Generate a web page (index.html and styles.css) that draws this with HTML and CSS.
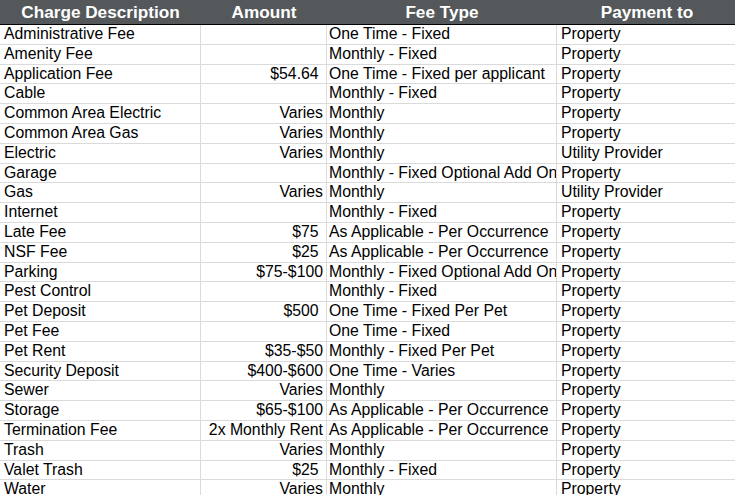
FILE: index.html
```html
<!DOCTYPE html>
<html>
<head>
<meta charset="utf-8">
<link rel="stylesheet" href="styles.css">
</head>
<body>
<div class="sheet">
  <div class="hd">Charge Description</div><div class="hd">Amount</div><div class="hd">Fee Type</div><div class="hd">Payment to</div>

  <div class="c">Administrative Fee</div><div class="c num"></div><div class="c">One Time - Fixed</div><div class="c">Property</div>
  <div class="c">Amenity Fee</div><div class="c num"></div><div class="c">Monthly - Fixed</div><div class="c">Property</div>
  <div class="c">Application Fee</div><div class="c num">$54.64&nbsp;</div><div class="c">One Time - Fixed per applicant</div><div class="c">Property</div>
  <div class="c">Cable</div><div class="c num"></div><div class="c">Monthly - Fixed</div><div class="c">Property</div>
  <div class="c">Common Area Electric</div><div class="c num">Varies</div><div class="c">Monthly</div><div class="c">Property</div>
  <div class="c">Common Area Gas</div><div class="c num">Varies</div><div class="c">Monthly</div><div class="c">Property</div>
  <div class="c">Electric</div><div class="c num">Varies</div><div class="c">Monthly</div><div class="c">Utility Provider</div>
  <div class="c">Garage</div><div class="c num"></div><div class="c">Monthly - Fixed Optional Add On</div><div class="c">Property</div>
  <div class="c">Gas</div><div class="c num">Varies</div><div class="c">Monthly</div><div class="c">Utility Provider</div>
  <div class="c">Internet</div><div class="c num"></div><div class="c">Monthly - Fixed</div><div class="c">Property</div>
  <div class="c">Late Fee</div><div class="c num">$75&nbsp;</div><div class="c">As Applicable - Per Occurrence</div><div class="c">Property</div>
  <div class="c">NSF Fee</div><div class="c num">$25&nbsp;</div><div class="c">As Applicable - Per Occurrence</div><div class="c">Property</div>
  <div class="c">Parking</div><div class="c num">$75-$100</div><div class="c">Monthly - Fixed Optional Add On</div><div class="c">Property</div>
  <div class="c">Pest Control</div><div class="c num"></div><div class="c">Monthly - Fixed</div><div class="c">Property</div>
  <div class="c">Pet Deposit</div><div class="c num">$500&nbsp;</div><div class="c">One Time - Fixed Per Pet</div><div class="c">Property</div>
  <div class="c">Pet Fee</div><div class="c num"></div><div class="c">One Time - Fixed</div><div class="c">Property</div>
  <div class="c">Pet Rent</div><div class="c num">$35-$50</div><div class="c">Monthly - Fixed Per Pet</div><div class="c">Property</div>
  <div class="c">Security Deposit</div><div class="c num">$400-$600</div><div class="c">One Time - Varies</div><div class="c">Property</div>
  <div class="c">Sewer</div><div class="c num">Varies</div><div class="c">Monthly</div><div class="c">Property</div>
  <div class="c">Storage</div><div class="c num">$65-$100</div><div class="c">As Applicable - Per Occurrence</div><div class="c">Property</div>
  <div class="c">Termination Fee</div><div class="c num">2x Monthly Rent</div><div class="c">As Applicable - Per Occurrence</div><div class="c">Property</div>
  <div class="c">Trash</div><div class="c num">Varies</div><div class="c">Monthly</div><div class="c">Property</div>
  <div class="c">Valet Trash</div><div class="c num">$25&nbsp;</div><div class="c">Monthly - Fixed</div><div class="c">Property</div>
  <div class="c">Water</div><div class="c num">Varies</div><div class="c">Monthly</div><div class="c">Property</div>
</div>
</body>
</html>
```
FILE: styles.css
```css
html, body {
  margin: 0;
  padding: 0;
  background: #ffffff;
  overflow: hidden;
}
.sheet {
  display: grid;
  grid-template-columns: 201px 126px 230px 180px;
  grid-template-rows: 25px;
  grid-auto-rows: 19.8px;
  font-family: "Liberation Sans", Arial, sans-serif;
  font-size: 15.8px;
  color: #000;
  width: 737px;
}
.hd {
  background: #54585a;
  color: #ffffff;
  font-weight: bold;
  font-size: 17.2px;
  text-align: center;
  line-height: 24px;
  border-bottom: 1px solid #000;
  box-sizing: border-box;
  white-space: nowrap;
  overflow: hidden;
}
.c {
  box-sizing: border-box;
  border-right: 1px solid #dadada;
  border-bottom: 1px solid #dadada;
  padding: 0 3px 0 4px;
  line-height: 18px;
  white-space: nowrap;
  overflow: hidden;
}
.c:nth-child(4n+3) {
  padding-left: 2px;
}
.num {
  text-align: right;
}
```
